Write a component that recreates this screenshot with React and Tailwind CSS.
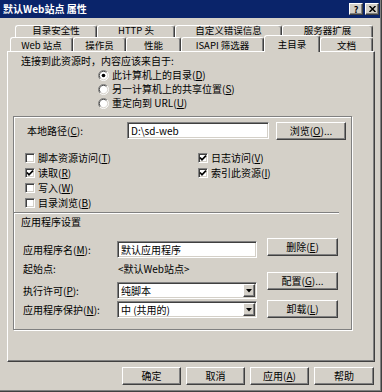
import React from "react";

const F = "font-['Noto_Sans_CJK_SC','Noto_Sans_CJK_JP',sans-serif]";
const raised =
  "border border-t-white border-l-white border-r-[#404040] border-b-[#404040] shadow-[inset_-1px_-1px_0_#808080] bg-[#d4d0c8]";
const sunken =
  "border border-t-[#808080] border-l-[#808080] border-r-white border-b-white shadow-[inset_1px_1px_0_#404040,inset_-1px_-1px_0_#d4d0c8] bg-white";

function U({ children }) {
  return <span className="underline">{children}</span>;
}

function Btn({ c, children }) {
  return (
    <div className={`flex items-center justify-center ${raised} ${c}`}>
      {children}
    </div>
  );
}

function Tab({ c, children }) {
  return (
    <div
      className={`h-full flex justify-center text-[9.5px] border-t border-l border-r border-t-white border-l-white border-r-[#404040] shadow-[inset_-1px_0_0_#808080] rounded-t-[3px] bg-[#d4d0c8] ${c}`}
    >
      {children}
    </div>
  );
}

function Radio({ checked, children }) {
  return (
    <div className="h-[14px] flex items-center gap-[3px]">
      <svg width="11" height="11" viewBox="0 0 12 12">
        <circle cx="6" cy="6" r="5" fill="#fff" />
        <path d="M2.11 9.89 A5.5 5.5 0 0 1 9.89 2.11" stroke="#808080" fill="none" />
        <path d="M9.89 2.11 A5.5 5.5 0 0 1 2.11 9.89" stroke="#fff" fill="none" />
        <path d="M2.8 9.2 A4.5 4.5 0 0 1 9.2 2.8" stroke="#404040" fill="none" />
        <path d="M9.2 2.8 A4.5 4.5 0 0 1 2.8 9.2" stroke="#d4d0c8" fill="none" />
        {checked && <circle cx="6" cy="6" r="2" fill="#000" />}
      </svg>
      <span>{children}</span>
    </div>
  );
}

function Check({ checked, children }) {
  return (
    <div className="h-[15px] flex items-center gap-[3px]">
      <div className={`w-[10px] h-[10px] ${sunken} flex items-center justify-center`}>
        {checked && (
          <svg width="8" height="8" viewBox="0 0 8 8">
            <polyline points="1,3.5 3,5.8 7,1.6" stroke="#000" strokeWidth="1.7" fill="none" />
          </svg>
        )}
      </div>
      <span>{children}</span>
    </div>
  );
}

function Select({ children }) {
  return (
    <div className={`w-[140px] h-[17px] ${sunken} flex items-center pl-[3px] pr-[1px]`}>
      <span className="flex-1">{children}</span>
      <div className={`w-[12px] h-[13px] ${raised} flex items-center justify-center`}>
        <svg width="6" height="4" viewBox="0 0 6 4">
          <polygon points="0,0 6,0 3,3.5" fill="#000" />
        </svg>
      </div>
    </div>
  );
}

export default function App() {
  return (
    <div
      className={`w-[382px] h-[392px] bg-[#d4d0c8] text-black text-[10px] leading-[12px] ${F} border-r border-b border-r-[#404040] border-b-[#404040] shadow-[inset_-1px_-1px_0_#808080] flex flex-col overflow-hidden`}
    >
      {/* title bar */}
      <div className="h-[18px] bg-[#0a246a] mr-[1px] flex items-center pl-[3px]">
        <span className="text-white font-bold text-[10px]">默认Web站点 属性</span>
        <div className="ml-auto flex gap-[2px] mr-[1px]">
          <Btn c="w-[14px] h-[12px]">
            <span className="font-bold text-[9px] leading-none">?</span>
          </Btn>
          <Btn c="w-[14px] h-[12px]">
            <svg width="7" height="6" viewBox="0 0 7 6">
              <path d="M0.5 0 L6.5 6 M6.5 0 L0.5 6" stroke="#000" strokeWidth="1.5" />
            </svg>
          </Btn>
        </div>
      </div>

      {/* tabs */}
      <div className="mt-[7px] flex flex-col">
        <div className="ml-[15px] flex h-[12px]">
          <Tab c="w-[82px] items-start leading-[9px]">目录安全性</Tab>
          <Tab c="w-[78px] items-start leading-[9px]">HTTP 头</Tab>
          <Tab c="w-[107px] items-start leading-[9px]">自定义错误信息</Tab>
          <Tab c="w-[91px] items-start leading-[9px]">服务器扩展</Tab>
        </div>
        <div className="ml-[10px] flex items-end h-[14px]">
          <Tab c="w-[63px] items-center leading-[10px]">Web 站点</Tab>
          <Tab c="w-[53px] items-center leading-[10px]">操作员</Tab>
          <Tab c="w-[55px] items-center leading-[10px]">性能</Tab>
          <Tab c="w-[83px] items-center leading-[10px]">ISAPI 筛选器</Tab>
          <div className="relative z-10 -mb-px w-[56px] h-[17px] flex items-start pt-[3px] justify-center text-[9.5px] leading-[11px] border-t border-l border-r border-t-white border-l-white border-r-[#404040] shadow-[inset_-1px_0_0_#808080] rounded-t-[3px] bg-[#d4d0c8]">
            主目录
          </div>
          <Tab c="w-[53px] items-center leading-[10px]">文档</Tab>
        </div>
      </div>

      {/* panel */}
      <div
        className={`ml-[7px] w-[368px] h-[311px] border border-t-white border-l-white border-r-[#404040] border-b-[#404040] shadow-[inset_-1px_-1px_0_#808080] flex flex-col`}
      >
        <div className="pl-[13px] mt-[3px] h-[12px]">连接到此资源时，内容应该来自于:</div>
        <div className="ml-[90px] mt-[1px] flex flex-col">
          <Radio checked>
            此计算机上的目录(<U>D</U>)
          </Radio>
          <Radio>
            另一计算机上的共享位置(<U>S</U>)
          </Radio>
          <Radio>
            重定向到 URL(<U>U</U>)
          </Radio>
        </div>

        {/* group box */}
        <div className="ml-[5px] mt-[6px] w-[339px] h-[214px] border border-[#808080] shadow-[inset_1px_1px_0_#fff,1px_1px_0_#fff] flex flex-col">
          <div className="mt-[5px] pl-[13px] flex items-start">
            <div className="w-[100px] h-[17px] flex items-center">
              本地路径(<U>C</U>):
            </div>
            <div className={`w-[142px] h-[17px] ${sunken} flex items-center pl-[3px]`}>D:\sd-web</div>
            <Btn c="ml-[7px] w-[70px] h-[18px]">
              浏览(<U>O</U>)...
            </Btn>
          </div>

          <div className="mt-[10px] pl-[11px] grid grid-cols-[173px_1fr]">
            <div className="flex flex-col">
              <Check>
                脚本资源访问(<U>T</U>)
              </Check>
              <Check checked>
                读取(<U>R</U>)
              </Check>
              <Check>
                写入(<U>W</U>)
              </Check>
              <Check>
                目录浏览(<U>B</U>)
              </Check>
            </div>
            <div className="flex flex-col">
              <Check checked>
                日志访问(<U>V</U>)
              </Check>
              <Check checked>
                索引此资源(<U>I</U>)
              </Check>
            </div>
          </div>

          <div className="mt-[2px] w-[325px] h-[2px] border-t border-t-[#808080] border-b border-b-white"></div>
          <div className="mt-[2px] pl-[7px] h-[12px]">应用程序设置</div>

          <div className="mt-[10px] flex">
            <div className="pl-[9px] pt-[3px] flex flex-col">
              <div className="flex items-center h-[17px]">
                <div className="w-[94px]">
                  应用程序名(<U>M</U>):
                </div>
                <div className={`w-[140px] h-[17px] ${sunken} flex items-center pl-[3px]`}>默认应用程序</div>
              </div>
              <div className="mt-[4px] flex items-center h-[14px]">
                <div className="w-[95px]">起始点:</div>
                <div>&lt;默认Web站点&gt;</div>
              </div>
              <div className="mt-[6px] flex items-center h-[17px]">
                <div className="w-[94px]">
                  执行许可(<U>P</U>):
                </div>
                <Select>纯脚本</Select>
              </div>
              <div className="mt-[2px] flex items-center h-[17px]">
                <div className="w-[94px]">
                  应用程序保护(<U>N</U>):
                </div>
                <Select>中 (共用的)</Select>
              </div>
            </div>
            <div className="ml-[10px] flex flex-col">
              <Btn c="w-[71px] h-[18px]">
                删除(<U>E</U>)
              </Btn>
              <Btn c="mt-[16px] w-[71px] h-[18px]">
                配置(<U>G</U>)...
              </Btn>
              <Btn c="mt-[10px] w-[71px] h-[18px]">
                卸载(<U>L</U>)
              </Btn>
            </div>
          </div>
        </div>
      </div>

      {/* bottom buttons */}
      <div className="mt-[5px] ml-[122px] flex gap-[5px]">
        <Btn c="w-[59px] h-[18px]">确定</Btn>
        <Btn c="w-[59px] h-[18px]">取消</Btn>
        <Btn c="w-[59px] h-[18px]">
          应用(<U>A</U>)
        </Btn>
        <Btn c="w-[60px] h-[18px]">帮助</Btn>
      </div>
    </div>
  );
}
